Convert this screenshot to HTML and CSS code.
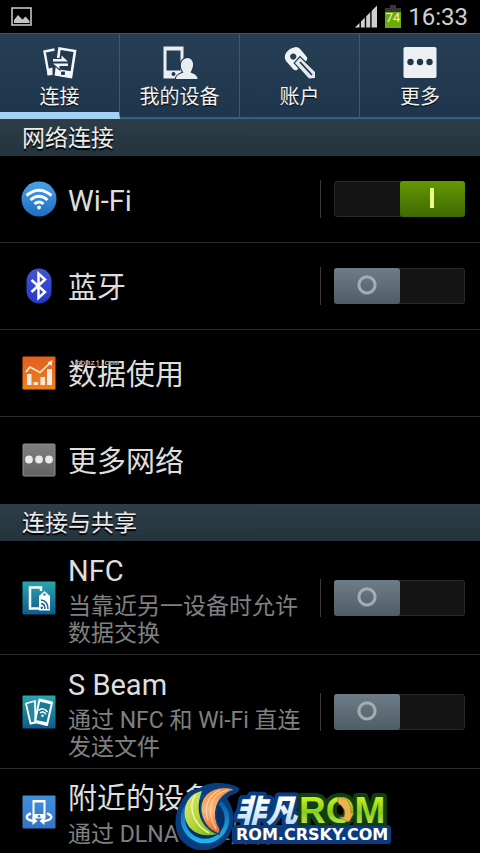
FILE: index.html
```html
<!DOCTYPE html>
<html lang="zh-CN">
<head>
<meta charset="utf-8">
<meta name="viewport" content="width=device-width, initial-scale=1">
<title>设置</title>
<link rel="stylesheet" href="styles.css">
</head>
<body>
<div class="screen">
  <header class="status">
    <svg class="status-picture" width="22" height="20" viewBox="0 0 22 20" aria-hidden="true"><rect x="1" y="1" width="19" height="17" fill="none" stroke="#c4c4c4" stroke-width="1.6"/><path d="M3 16v-3l4-5 3 3 1.500 1.500 3-3 4 4.500v2z" fill="#c4c4c4"/></svg>
    <div class="status-right">
      <svg width="23" height="23" viewBox="0 0 23 23" aria-hidden="true"><path d="M0 22.500 22 .5v22z" fill="#cfcfcf"/><path d="M5.200 0v23M10.500 0v23M15.900 0v23" stroke="#000" stroke-width="1.400"/></svg>
      <svg class="battery" width="16" height="23" viewBox="0 0 16 23" role="img" aria-label="74%"><path d="M5 0h6v3h5v6H0V3h5z" fill="#383838"/><path d="M0 7h16v16H0z" fill="#6faa0c"/><text x="8" y="17" class="battery-text">74</text></svg>
      <time class="clock">16:33</time>
    </div>
  </header>

  <nav class="tabs">
    <a class="tab tab-active" href="#connections">
      <svg width="36" height="36" viewBox="0 0 36 36" aria-hidden="true"><path d="M12.500 4.500 2.500 6.500l4 22 3.500-.5" fill="none" stroke="#f4f7f9" stroke-width="2.400"/><path d="m5.500 24 5-1.500v7.500l-5 .5z" fill="#f4f7f9"/><path d="M17.500 3.500 33 6 29 32 14 29.500z" fill="#23394d" stroke="#f4f7f9" stroke-width="2.600"/><path d="m14.500 24 16 2.500-1.400 6.500L13 30z" fill="#f4f7f9"/><rect x="19" y="26.500" width="4" height="3.500" rx="1" fill="#20384c"/><path d="M11 14h8.500v-3.500l6.500 6H11zM26 18.500H11l6.500 5.500v-3H26z" fill="#f4f7f9" stroke="#23394d" stroke-width="2" paint-order="stroke"/></svg>
      <span>连接</span>
    </a>
    <a class="tab" href="#device">
      <svg width="36" height="36" viewBox="0 0 36 36" aria-hidden="true"><path fill="#e9eef2" fill-rule="evenodd" d="M1.500 1.500h20v32h-20zm3 4v20h14v-20z"/><circle cx="11.500" cy="29" r="2" fill="#20384c"/><path d="M14 34c0-4 4-5 7.500-6.500-3-3.500-3.500-9-1-12 3-3.500 8-3.500 10 1 1.500 4-.5 8-2 11 3 1 7 2.500 7 6.500z" fill="#e9eef2" stroke="#20384c" stroke-width="2.400" paint-order="stroke"/></svg>
      <span>我的设备</span>
    </a>
    <a class="tab" href="#accounts">
      <svg width="36" height="36" viewBox="0 0 36 36" aria-hidden="true"><path fill="#eef2f5" fill-rule="evenodd" d="M3 10Q6 3 14 2q3 0 5 3l5 6q3 3-1 6l-8 8q-2 1-4-1l-7-8q-2-3-1-6zm6-.5a3 3 0 1 0 4.500 0 3 3 0 0 0-4.500 0z"/><path d="m13 18 5-5.500 15 14.500v6l-6 .5z" fill="#e3e9ee" stroke="#22394e" stroke-width="2.400" paint-order="stroke"/><path d="m18 17 12 13" stroke="#22394e" stroke-width="1.800"/></svg>
      <span>账户</span>
    </a>
    <a class="tab" href="#more">
      <svg width="36" height="36" viewBox="0 0 36 36" aria-hidden="true"><rect x="1.500" y="2" width="33" height="31" rx="1.800" fill="#edf0f3"/><g fill="#20374b"><circle cx="8.500" cy="17" r="3.200"/><circle cx="18" cy="17" r="3.200"/><circle cx="27.500" cy="17" r="3.200"/></g></svg>
      <span>更多</span>
    </a>
  </nav>

  <main>
    <section id="connections">
      <h2 class="heading">网络连接</h2>
      <ul class="list">
        <li class="row">
          <svg class="icon" viewBox="0 0 36 36" aria-hidden="true"><defs><linearGradient id="wifi" x2="0" y2="1"><stop stop-color="#4c9fe8"/><stop offset="1" stop-color="#1d6fc0"/></linearGradient></defs><circle cx="18" cy="18" r="17.500" fill="url(#wifi)"/><g fill="none" stroke="#fff" stroke-width="3"><path d="M5.500 14.500Q18 4 30.500 14.500"/><path d="M9.500 19Q18 11.500 26.500 19"/><path d="M13.500 23Q18 19 22.500 23"/></g><circle cx="18" cy="26.500" r="1.900" fill="#fff"/></svg>
          <label class="title" for="sw-wifi">Wi-Fi</label>
          <div class="control"><input class="switch" type="checkbox" id="sw-wifi" checked></div>
        </li>
        <li class="row">
          <svg class="icon" viewBox="0 0 36 36" aria-hidden="true"><defs><linearGradient id="bt" x2="0" y2="1"><stop stop-color="#4256d2"/><stop offset="1" stop-color="#2638c8"/></linearGradient></defs><rect x="5.500" y=".5" width="25" height="35" rx="12.500" fill="url(#bt)"/><path d="m10.500 12 13.500 12-6.500 6V5.500l6.500 6L10.500 24" fill="none" stroke="#fff" stroke-width="2.500"/></svg>
          <label class="title" for="sw-bt">蓝牙</label>
          <div class="control"><input class="switch" type="checkbox" id="sw-bt"></div>
        </li>
        <li class="row">
          <svg class="icon" viewBox="0 0 36 36" aria-hidden="true"><defs><linearGradient id="data" x2="0" y2="1"><stop stop-color="#e0601f"/><stop offset="1" stop-color="#f28018"/></linearGradient></defs><rect x="1.500" y="1.500" width="33" height="33" rx="1" fill="url(#data)"/><g fill="#f2ece8"><path d="M6 19h4.500v11H6zM12.500 27H17v3h-4.500zM19.500 22H24v8h-4.500zM26 14h5v16h-5z"/><path d="m31.500 5-1 6-4-3.500z"/></g><path d="m5 17 4-5 10 5.500L29 8" fill="none" stroke="#f5eee8" stroke-width="1.600"/></svg>
          <a class="title" href="#data">数据使用<small class="stamp">.romzj.com</small></a>
        </li>
        <li class="row">
          <svg class="icon" viewBox="0 0 36 36" aria-hidden="true"><defs><linearGradient id="dots" x2="0" y2="1"><stop stop-color="#7e7f81"/><stop offset="1" stop-color="#626365"/></linearGradient></defs><rect x="2" y="2" width="32" height="32" rx="1" fill="url(#dots)" stroke="#8d8e90"/><g fill="#e9e9e9"><circle cx="8" cy="17.500" r="3.900"/><circle cx="18" cy="17.500" r="3.900"/><circle cx="28" cy="17.500" r="3.900"/></g></svg>
          <a class="title" href="#more-networks">更多网络</a>
        </li>
      </ul>
    </section>

    <section>
      <h2 class="heading">连接与共享</h2>
      <ul class="list">
        <li class="row">
          <svg class="icon" viewBox="0 0 36 36" aria-hidden="true"><defs><linearGradient id="teal" x2="0" y2="1"><stop stop-color="#2aa6ac"/><stop offset="1" stop-color="#105a8c"/></linearGradient></defs><rect x="1.500" y="1.500" width="33" height="33" rx="1" fill="url(#teal)"/><path d="M20 11V7.500H9v21h9" fill="none" stroke="#fff" stroke-width="2.500"/><path d="M23.500 11 29 16v14.500H18V16z" fill="#fff"/><circle cx="23.500" cy="14.500" r="1.200" fill="#2588a0"/><path d="M20 20q7 1 7 9M20 23.500q4 .5 4 5.500" fill="none" stroke="#17658f" stroke-width="1.500"/><circle cx="20.800" cy="27.800" r="1.200" fill="#17658f"/></svg>
          <div class="text"><label class="title" for="sw-nfc">NFC</label><p class="summary">当靠近另一设备时允许数据交换</p></div>
          <div class="control"><input class="switch" type="checkbox" id="sw-nfc"></div>
        </li>
        <li class="row">
          <svg class="icon" viewBox="0 0 36 36" aria-hidden="true"><rect x="1.500" y="1.500" width="33" height="33" rx="1" fill="url(#teal)"/><path d="M14 7 5 9.500l4.500 20 5-1z" fill="#24889d" stroke="#fff" stroke-width="1.800" stroke-linejoin="round"/><path d="M18.500 5.500 31 8.500 26 31l-12-3z" fill="#1c7897" stroke="#fff" stroke-width="2" stroke-linejoin="round"/><path d="m18.500 5.500 12.500 3-.5 2-12.300-3zM14.500 26l12.300 2.500L26 31l-12-3z" fill="#fff"/><path d="M17.500 16.500q5-4 9 1.500M19 19q3-2.500 6 1.200" fill="none" stroke="#fff" stroke-width="1.400"/><circle cx="21.500" cy="21.700" r="1.200" fill="#fff"/></svg>
          <div class="text"><label class="title" for="sw-beam">S Beam</label><p class="summary">通过 NFC 和 Wi-Fi 直连发送文件</p></div>
          <div class="control"><input class="switch" type="checkbox" id="sw-beam"></div>
        </li>
        <li class="row">
          <svg class="icon" viewBox="0 0 36 36" aria-hidden="true"><defs><linearGradient id="near" x2="0" y2="1"><stop stop-color="#4090dc"/><stop offset="1" stop-color="#3474c4"/></linearGradient></defs><rect x="1.500" y="1.500" width="33" height="33" rx="1" fill="url(#near)"/><path d="M10 19.500c-6 2-6 6.500 3 7.500M26 19.500c7 2 6 7.500-6 7.500" fill="none" stroke="#fff" stroke-width="2.400"/><path d="m11.500 22.500 5 4.500-5 4zM23.500 23 18.500 27l5 4z" fill="#fff"/><path fill="#fff" fill-rule="evenodd" d="M11.500 6h13v18.500h-13zm2 2.500V20h9V8.500z"/><circle cx="18" cy="22.300" r="1.200" fill="#3979c4"/></svg>
          <div class="text"><a class="title" href="#nearby">附近的设备</a><p class="summary">通过 DLNA 共享媒体</p></div>
        </li>
      </ul>
    </section>
  </main>

  <svg class="watermark" width="230" height="78" viewBox="0 0 230 78" role="img" aria-label="非凡ROM">
    <defs>
      <linearGradient id="wgreen" x2="0" y2="1"><stop offset=".2" stop-color="#c3ee1c"/><stop offset=".55" stop-color="#86cb21"/><stop offset="1" stop-color="#d9f36a"/></linearGradient>
      <linearGradient id="wwhite" x2="0" y2="1"><stop offset=".3" stop-color="#fff"/><stop offset="1" stop-color="#a9d3f2"/></linearGradient>
      <linearGradient id="wlime" x2="1" y2="1"><stop stop-color="#dce97a"/><stop offset=".5" stop-color="#b5d63e"/><stop offset="1" stop-color="#6fb512"/></linearGradient>
      <linearGradient id="worange" x2="0" y2="1"><stop stop-color="#f0913a"/><stop offset=".5" stop-color="#f6b680"/><stop offset="1" stop-color="#e86a1c"/></linearGradient>
      <linearGradient id="wring" x2="0" y2="1"><stop stop-color="#0a4f9c"/><stop offset="1" stop-color="#22b4ea"/></linearGradient>
    </defs>
    <path d="M30 13C40 5 62 8 69 13q1 4-5 6-6 2-7 5c8 10 9 26 1 38-9 14-31 18-44 6C3 59 3 39 12 25c5-8 11-12 18-12z" fill="#083e80"/>
    <circle cx="35" cy="44" r="22" fill="#062f66" stroke="url(#wring)" stroke-width="4.500"/>
    <path d="M32 16C17 19 12 34 16 46c4 12 18 17 31 13C31 53 24 36 32 16z" fill="url(#wlime)"/>
    <path d="M25 20c-7 13-2 29 14 38" fill="none" stroke="#eff7a6" stroke-width="1.500"/>
    <path d="M66 14.500C52 9 34 14 31 29c-2 13 5 26 18 30 1-2 1-4 1-5-8-13-6-33 16-39.500z" fill="url(#worange)" stroke="#083e80" stroke-width="1.500"/>
    <path d="M58 15C41 18 35 35 46 54M50 15C37 21 34 33 38 45" fill="none" stroke="#fbd3ac" stroke-width="1.200"/>
    <rect x="62" y="50" width="159" height="19" rx="4" fill="#0c3c80"/>
    <g class="wm-back">
      <text x="65" y="47" class="wm-cn" stroke="#0c3c80">非凡</text>
      <text x="129" y="48" class="wm-rom" stroke="#123f12">ROM</text>
    </g>
    <text x="65" y="47" class="wm-cn" fill="url(#wwhite)" aria-hidden="true">非凡</text>
    <rect x="62" y="51" width="159" height="18" rx="4" fill="#0c3c80"/>
    <text x="66" y="65" class="wm-url" fill="#fff">ROM.CRSKY.COM</text>
    <text x="129" y="48" class="wm-rom" fill="url(#wgreen)" aria-hidden="true">ROM</text>
    <path d="M168 22q14 0 13 16h3l-5 9-10-5h5q3-8-6-14z" fill="#eeb04d" stroke="#6b7a1c" stroke-width=".6"/>
  </svg>
</div>
</body>
</html>
```

FILE: styles.css
```css
* {
  box-sizing: border-box;
}

html,
body {
  height: 100%;
}

body {
  margin: 0;
  background: #000;
  color: #dedede;
  font-family: Roboto, "Noto Sans CJK SC", sans-serif;
}

a {
  color: inherit;
  text-decoration: none;
}

.screen {
  position: relative;
  height: 100vh;
  overflow: hidden;
}

.status {
  display: flex;
  align-items: center;
  justify-content: space-between;
  height: 33px;
  padding: 0 12px 0 11px;
}

.status-right {
  display: flex;
  align-items: center;
  gap: 7px;
}

.battery-text {
  font: 13px Roboto, sans-serif;
  fill: #e8f4d0;
  text-anchor: middle;
}

.clock {
  font-size: 24px;
  line-height: 32px;
  color: #cfcfcf;
}

.tabs {
  display: grid;
  grid-template-columns: repeat(4, 1fr);
  height: 86px;
  border-top: 1px solid #3d566a;
  background: linear-gradient(#263f54, #1e364d);
}

.tab {
  display: flex;
  flex-direction: column;
  align-items: center;
  gap: 3px;
  padding-top: 11px;
  border-right: 1px solid #3f596e;
  border-bottom: 2px solid #36617c;
  font-size: 20px;
  line-height: 26px;
  color: #f2f2f2;
  text-shadow: 0 1px 1px #000;
}

.tab:last-child {
  border-right: 0;
}

.tab-active {
  border-bottom: 7px solid #a5d2f2;
}

.heading {
  margin: 0;
  padding: 0 22px;
  height: 37px;
  background: linear-gradient(#2e3d47, #23343d);
  font-size: 23px;
  font-weight: 400;
  line-height: 40px;
  color: #ececec;
  text-shadow: 0 2px 1px #000;
}

.list {
  margin: 0;
  padding: 0;
  list-style: none;
}

.row {
  display: flex;
  align-items: center;
  min-height: 87px;
  padding: 0 15px 0 21px;
  border-bottom: 1px solid #2b2b2b;
}

.row:last-child {
  border-bottom-color: transparent;
}

.icon {
  flex: none;
  width: 36px;
  height: 36px;
  margin-right: 11px;
}

.text {
  flex: 1;
  min-width: 0;
  padding: 13px 0 7px;
}

.title {
  position: relative;
  display: block;
  font-size: 29px;
  line-height: 34px;
}

.row > .title {
  flex: 1;
  padding-top: 4px;
}

.summary {
  margin: 5px 0 0;
  font-size: 23px;
  line-height: 27px;
  color: #808080;
}

.stamp {
  position: absolute;
  left: 3px;
  top: 4px;
  font: 8px/10px "Liberation Mono", monospace;
  text-shadow: 0 0 1px #000, 0 0 1px #000;
}

.control {
  flex: none;
  display: flex;
  align-items: center;
  height: 38px;
  padding-left: 13px;
  border-left: 1px solid #3a3a3a;
}

.switch {
  appearance: none;
  display: grid;
  grid-template-columns: 1fr 1fr;
  width: 131px;
  height: 36px;
  margin: 0;
  border: 1px solid #292929;
  border-radius: 3px;
  background: #141414;
}

.switch::before {
  content: "";
  margin: -1px 0 -1px -1px;
  border-radius: 3px;
  background:
    radial-gradient(circle at 50% 47%, transparent 6px, #a4adb3 7px, #a4adb3 9px, transparent 10px),
    linear-gradient(#6d7c86, #4f5e66);
}

.switch:checked::before {
  grid-column: 2;
  margin: -1px -1px -1px 0;
  background:
    linear-gradient(#e9f98c, #e9f98c) 50% 45% / 4px 20px no-repeat,
    linear-gradient(#639803, #406803);
}

.watermark {
  position: absolute;
  left: 170px;
  bottom: 0;
}

.wm-back text {
  fill: none;
  stroke-width: 8px;
  stroke-linejoin: round;
}

.wm-cn {
  font: italic 900 31px "Noto Sans CJK SC", sans-serif;
}

.wm-rom {
  font: 700 37px "Liberation Sans", sans-serif;
}

.wm-url {
  font: 700 16px "DejaVu Sans", sans-serif;
}
```
